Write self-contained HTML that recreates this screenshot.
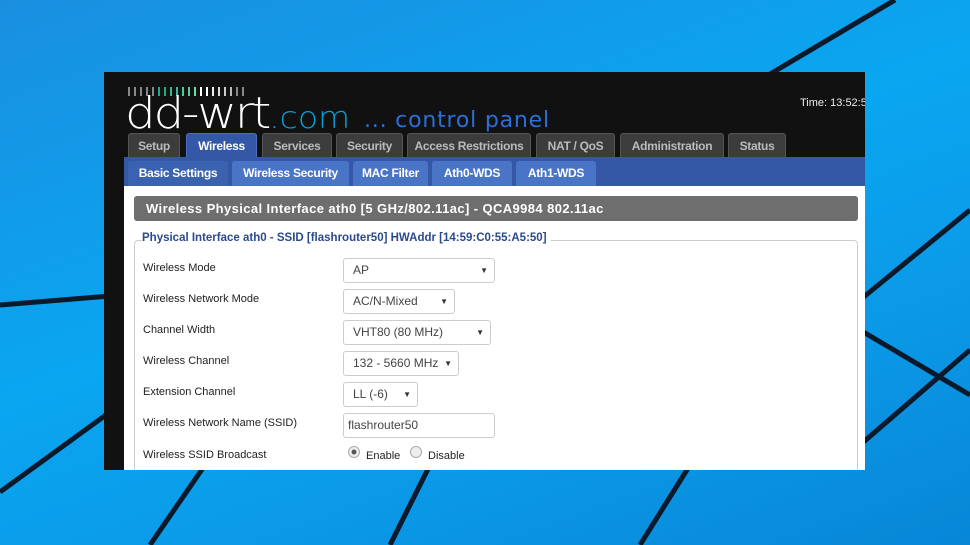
<!DOCTYPE html>
<html><head><meta charset="utf-8"><style>
*{margin:0;padding:0;box-sizing:border-box}
body{width:970px;height:545px;overflow:hidden;position:relative;font-family:"Liberation Sans",sans-serif;background:linear-gradient(160deg,#1a8fe0 0%,#0aa6f0 45%,#0b9ae8 70%,#0786d6 100%)}
svg.bg{position:absolute;left:0;top:0}
#win{position:absolute;left:104px;top:72px;width:761px;height:398px;background:#111;overflow:hidden}
.bars{position:absolute;left:24px;top:15px;font-size:0}
.bars i{display:inline-block;width:2px;height:9px;margin-right:4px;background:#888}
.logo{position:absolute;left:21px;top:20px;color:#fff;font-size:44px;letter-spacing:-2px;font-family:"DejaVu Sans",sans-serif;font-weight:200;line-height:44px;transform:scaleX(1.1);transform-origin:left}
.logo span{color:#0a9fd8;font-size:30px;letter-spacing:0}
.cp{position:absolute;left:260px;top:36px;color:#2d6fd8;font-size:22px;font-family:"DejaVu Sans",sans-serif;letter-spacing:.8px}
.time{position:absolute;left:696px;top:25px;color:#eee;font-size:11px;white-space:nowrap}
.tabs{position:absolute;left:24px;top:61px;height:24px}
.tab{position:absolute;top:0;height:24px;background:#3c3c3c;color:#bbb;font-size:12px;font-weight:bold;text-align:center;line-height:24px;border-radius:3px 3px 0 0;border:1px solid #555;border-bottom:none;white-space:nowrap;letter-spacing:-.3px}
.tab.on{background:#3558a6;color:#fff;height:26px;top:0;border-color:#4a6fc0}
.sub{position:absolute;left:20px;top:85px;width:741px;height:29px;background:#3558a6}
.st{position:absolute;top:4px;height:25px;background:#4a75c6;color:#fff;font-size:12px;font-weight:bold;line-height:25px;text-align:center;border-radius:3px 3px 0 0;letter-spacing:-.3px}
.st.on{background:#3a62b0}
.content{position:absolute;left:20px;top:114px;width:741px;height:284px;background:#fff}
.hdr{position:absolute;left:10px;top:10px;width:724px;height:25px;background:#6e6e6e;border-radius:3px;color:#fff;font-weight:bold;font-size:13px;line-height:25px;padding-left:12px;letter-spacing:.4px}
.fs{position:absolute;left:10px;top:54px;width:724px;height:260px;border:1px solid #ccc;border-radius:4px}
.legend{position:absolute;left:18px;top:46px;background:#fff;padding:0 4px 0 0;color:#2b4a8c;font-weight:bold;font-size:11.5px}
.lbl{position:absolute;left:19px;color:#222;font-size:11px}
.sel{position:absolute;left:219px;height:25px;border:1px solid #ccc;border-radius:3px;font-size:12px;color:#444;line-height:23px;padding-left:9px}
.sel:after{content:"▼";position:absolute;right:6px;top:0;font-size:8px;color:#333}
.sel.noarr:after{content:""}
.rad{position:absolute;top:260px;width:12px;height:12px;border-radius:50%;border:1px solid #aaa;background:#eee}
</style></head><body>
<svg class="bg" width="970" height="545">
<g stroke="#0b1a2a" stroke-width="5" fill="none">
<line x1="895" y1="0" x2="760" y2="80"/>
<line x1="0" y1="305" x2="110" y2="296"/>
<line x1="0" y1="492" x2="110" y2="412"/>
<line x1="150" y1="545" x2="205" y2="465"/>
<line x1="390" y1="545" x2="430" y2="465"/>
<line x1="640" y1="545" x2="690" y2="465"/>
<line x1="860" y1="330" x2="970" y2="395"/>
<line x1="860" y1="300" x2="970" y2="210"/>
<line x1="860" y1="445" x2="970" y2="350"/>
</g></svg>
<div id="win">
<div class="bars"><i></i><i></i><i></i><i></i><i></i><i style="background:#2a8"></i><i style="background:#2a8"></i><i style="background:#3b9"></i><i style="background:#3b9"></i><i style="background:#4c9"></i><i style="background:#5c9"></i><i style="background:#6da"></i><i style="background:#fff"></i><i style="background:#fff"></i><i style="background:#eee"></i><i style="background:#ddd"></i><i style="background:#ccc"></i><i style="background:#bbb"></i><i></i><i></i></div>
<div class="logo">dd-wrt<span>.com</span></div>
<div class="cp">... control panel</div>
<div class="time">Time: 13:52:5</div>
<div class="tabs">
<div class="tab" style="left:0;width:52px">Setup</div>
<div class="tab on" style="left:58px;width:71px">Wireless</div>
<div class="tab" style="left:134px;width:70px">Services</div>
<div class="tab" style="left:208px;width:67px">Security</div>
<div class="tab" style="left:279px;width:124px">Access Restrictions</div>
<div class="tab" style="left:408px;width:79px">NAT / QoS</div>
<div class="tab" style="left:492px;width:104px">Administration</div>
<div class="tab" style="left:600px;width:58px">Status</div>
</div>
<div class="sub">
<div class="st on" style="left:4px;width:100px">Basic Settings</div>
<div class="st" style="left:108px;width:117px">Wireless Security</div>
<div class="st" style="left:229px;width:75px">MAC Filter</div>
<div class="st" style="left:308px;width:80px">Ath0-WDS</div>
<div class="st" style="left:392px;width:80px">Ath1-WDS</div>
</div>
<div class="content">
<div class="hdr">Wireless Physical Interface ath0 [5 GHz/802.11ac] - QCA9984 802.11ac</div>
<div class="fs"></div>
<div class="legend">Physical Interface ath0 - SSID [flashrouter50] HWAddr [14:59:C0:55:A5:50]</div>
<div class="lbl" style="top:76px">Wireless Mode</div>
<div class="lbl" style="top:107px">Wireless Network Mode</div>
<div class="lbl" style="top:138px">Channel Width</div>
<div class="lbl" style="top:169px">Wireless Channel</div>
<div class="lbl" style="top:200px">Extension Channel</div>
<div class="lbl" style="top:231px">Wireless Network Name (SSID)</div>
<div class="lbl" style="top:263px">Wireless SSID Broadcast</div>
<div class="sel" style="top:72px;width:152px">AP</div>
<div class="sel" style="top:103px;width:112px">AC/N-Mixed</div>
<div class="sel" style="top:134px;width:148px">VHT80 (80 MHz)</div>
<div class="sel" style="top:165px;width:116px">132 - 5660 MHz</div>
<div class="sel" style="top:196px;width:75px">LL (-6)</div>
<div class="sel noarr" style="top:227px;width:152px;padding-left:4px;">flashrouter50</div>
<div class="rad" style="left:224px;background:radial-gradient(#555 30%,#eee 40%)"></div>
<div class="lbl" style="left:242px;top:264px">Enable</div>
<div class="rad" style="left:286px"></div>
<div class="lbl" style="left:304px;top:264px">Disable</div>
</div>
</div>
</body></html>
